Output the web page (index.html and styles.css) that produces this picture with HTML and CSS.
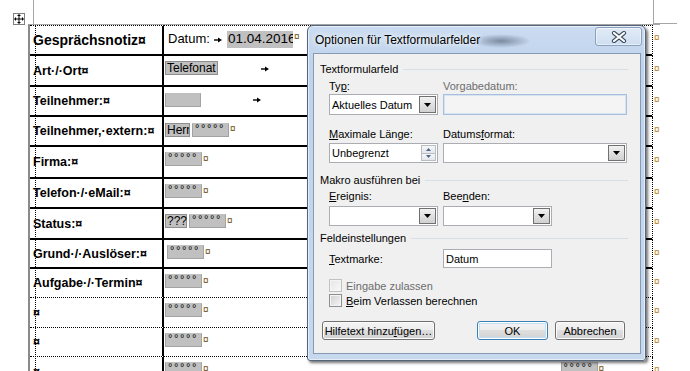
FILE: index.html
```html
<!DOCTYPE html>
<html lang="de">
<head>
<meta charset="utf-8">
<title>Optionen für Textformularfelder</title>
<link rel="stylesheet" href="styles.css">
</head>
<body>
<div class="page">
  <div class="marks">
    <div class="mark-left"></div>
    <div class="mark-right"></div>
  </div>
  <span class="move-handle"><svg width="10" height="10" viewBox="0 0 10 10"><path d="M5 1.5v7M1.5 5h7" stroke="#000" stroke-width="1"/><path d="M5 0L3 2h4zM5 10L3 8h4zM0 5l2-2v4zM10 5L8 3v4z" fill="#000"/></svg></span>

  <div class="doc-table">
    <div class="row first h31">
      <div class="cell-l head">Gesprächsnotiz¤</div>
      <div class="cell-r"><span class="plain">Datum:</span><svg class="tab t1" width="8" height="6" viewBox="0 0 8 6"><path d="M0 3h5" stroke="#000" stroke-width="1.4"/><path d="M4 0.5L8 3 4 5.5z" fill="#000"/></svg><span class="field date">01.04.2016</span><span class="cm big">¤</span></div>
      <div class="endmark">¤</div>
    </div>
    <div class="row h31">
      <div class="cell-l">Art·/·Ort¤</div>
      <div class="cell-r"><span class="field txt">Telefonat</span><svg class="tab t2" width="8" height="6" viewBox="0 0 8 6"><path d="M0 3h5" stroke="#000" stroke-width="1.4"/><path d="M4 0.5L8 3 4 5.5z" fill="#000"/></svg></div>
      <div class="endmark">¤</div>
    </div>
    <div class="row h30">
      <div class="cell-l">Teilnehmer:¤</div>
      <div class="cell-r"><span class="field empty"></span><svg class="tab t3" width="8" height="6" viewBox="0 0 8 6"><path d="M0 3h5" stroke="#000" stroke-width="1.4"/><path d="M4 0.5L8 3 4 5.5z" fill="#000"/></svg></div>
      <div class="endmark">¤</div>
    </div>
    <div class="row h30">
      <div class="cell-l">Teilnehmer,·extern:¤</div>
      <div class="cell-r"><span class="field txt herr">Herr</span><span class="field dots">°°°°°</span><span class="cm">¤</span></div>
      <div class="endmark">¤</div>
    </div>
    <div class="row h32">
      <div class="cell-l">Firma:¤</div>
      <div class="cell-r"><span class="field dots">°°°°°</span><span class="cm">¤</span></div>
      <div class="endmark">¤</div>
    </div>
    <div class="row h30">
      <div class="cell-l">Telefon·/·eMail:¤</div>
      <div class="cell-r"><span class="field dots">°°°°°</span><span class="cm">¤</span></div>
      <div class="endmark">¤</div>
    </div>
    <div class="row h31">
      <div class="cell-l">Status:¤</div>
      <div class="cell-r"><span class="field txt q">???</span><span class="field dots">°°°°°</span><span class="cm">¤</span></div>
      <div class="endmark">¤</div>
    </div>
    <div class="row h29">
      <div class="cell-l">Grund·/·Auslöser:¤</div>
      <div class="cell-r"><span class="field dots shift">°°°°°</span><span class="cm">¤</span></div>
      <div class="endmark">¤</div>
    </div>
    <div class="row h29 dot">
      <div class="cell-l">Aufgabe·/·Termin¤</div>
      <div class="cell-r"><span class="field dots">°°°°°</span><span class="cm">¤</span></div>
      <div class="endmark">¤</div>
    </div>
    <div class="row h30 dot">
      <div class="cell-l">¤</div>
      <div class="cell-r"><span class="field dots">°°°°°</span><span class="cm">¤</span></div>
      <div class="endmark">¤</div>
    </div>
    <div class="row h29 dot">
      <div class="cell-l">¤</div>
      <div class="cell-r"><span class="field dots">°°°°°</span><span class="cm">¤</span></div>
      <div class="endmark">¤</div>
    </div>
    <div class="row h30 dot">
      <div class="cell-l">¤</div>
      <div class="cell-r"><span class="field dots">°°°°°</span><span class="cm">¤</span><span class="field dots far">°°°°°</span><span class="cm">¤</span></div>
      <div class="endmark">¤</div>
    </div>
  </div>

  <div class="dialog">
    <div class="titlebar">
      <span class="title">Optionen für Textformularfelder</span>
      <span class="close"><svg width="16" height="12" viewBox="0 0 16 12"><path d="M3 2l10 8M13 2L3 10" stroke="#3d4a5c" stroke-width="4.2" stroke-linecap="round"/><path d="M3 2l10 8M13 2L3 10" stroke="#fff" stroke-width="2.2" stroke-linecap="round"/></svg></span>
    </div>
    <div class="panel">
      <div class="sec">Textformularfeld</div>
      <div class="grid lbl l1"><span>Ty<u>p</u>:</span><span class="dis">Vorgabedatum:</span></div>
      <div class="grid ctl c1">
        <div class="combo"><span class="val">Aktuelles Datum</span><span class="dd"><svg width="7" height="4" viewBox="0 0 7 4"><path d="M0 0h7L3.5 4z" fill="#000"/></svg></span></div>
        <div class="tbox disabled"></div>
      </div>
      <div class="grid lbl l2"><span><u>M</u>aximale Länge:</span><span>Datums<u>f</u>ormat:</span></div>
      <div class="grid ctl c2">
        <div class="combo spin"><span class="val">Unbegrenzt</span><span class="spinbtns"><span class="sb"><svg width="5" height="3" viewBox="0 0 5 3"><path d="M0 3h5L2.5 0z" fill="#4a6690"/></svg></span><span class="sb"><svg width="5" height="3" viewBox="0 0 5 3"><path d="M0 0h5L2.5 3z" fill="#4a6690"/></svg></span></span></div>
        <div class="combo"><span class="val"></span><span class="dd"><svg width="7" height="4" viewBox="0 0 7 4"><path d="M0 0h7L3.5 4z" fill="#000"/></svg></span></div>
      </div>
      <div class="sec s2">Makro ausführen bei</div>
      <div class="grid lbl l3"><span><u>E</u>reignis:</span><span>Bee<u>n</u>den:</span></div>
      <div class="grid ctl c3 narrow">
        <div class="combo"><span class="val"></span><span class="dd"><svg width="7" height="4" viewBox="0 0 7 4"><path d="M0 0h7L3.5 4z" fill="#000"/></svg></span></div>
        <div class="combo"><span class="val"></span><span class="dd"><svg width="7" height="4" viewBox="0 0 7 4"><path d="M0 0h7L3.5 4z" fill="#000"/></svg></span></div>
      </div>
      <div class="sec s3">Feldeinstellungen</div>
      <div class="grid ctl c4 narrow">
        <span class="inl"><u>T</u>extmarke:</span>
        <div class="tbox"><span class="val">Datum</span></div>
      </div>
      <label class="chk k1"><span class="cb dis-cb"></span><span class="dis">Eingabe zulassen</span></label>
      <label class="chk k2"><span class="cb"></span><span><u>B</u>eim Verlassen berechnen</span></label>
      <div class="buttons">
        <span class="btn b-help">Hilfetext hinzu<u>f</u>ügen…</span>
        <span class="btn b-ok">OK</span>
        <span class="btn b-cancel">Abbrechen</span>
      </div>
    </div>
  </div>
</div>
</body>
</html>
```

FILE: styles.css
```css
* { box-sizing: border-box; }
html, body { margin: 0; padding: 0; background: #fff; }
body {
  width: 690px; height: 371px; overflow: hidden;
  font-family: "Liberation Sans", Arial, sans-serif; color: #000;
}
.page { position: relative; width: 690px; height: 371px; }

/* crop marks */
.marks { display: flex; height: 24px; }
.mark-left { width: 34px; border-right: 1px solid #a6a6a6; }
.mark-right { margin-left: 619px; width: 24px; border-left: 1px solid #a6a6a6; border-bottom: 1px solid #a6a6a6; }

.move-handle {
  position: absolute; left: 13px; top: 13px; width: 12px; height: 12px;
  border: 1px solid #7f7f7f; background: #fff;
  display: flex; align-items: center; justify-content: center;
}

/* document table */
.doc-table {
  position: relative; margin-left: 28px; width: max-content;
  border-top: 1px solid #a8a8a8; border-left: 2px solid #8a8a8a;
}
.doc-table::before {
  content: ""; position: absolute; left: 5px; top: 0; bottom: 0;
  border-left: 1px dotted #000;
}
.row { display: flex; }
.h29 { height: 29px; } .h30 { height: 30px; } .h31 { height: 31px; } .h32 { height: 32px; }
.cell-l {
  width: 134px; border-right: 2px solid #000; border-bottom: 2px solid #000;
  padding-left: 3px; display: flex; align-items: center;
  font-weight: bold; font-size: 12.5px; white-space: nowrap;
}
.cell-l.head { font-size: 14px; }
.cell-r {
  width: 489px; border-right: 1px dotted #000; border-bottom: 2px solid #000;
  padding: 5px 0 0 1px; display: flex; align-items: flex-start;
  font-size: 12px; white-space: nowrap;
}
.row.first .cell-l, .row.first .cell-r { border-top: 1px dotted #000; }
.row.dot .cell-l, .row.dot .cell-r { border-bottom: 1px dotted #000; }
.endmark { padding: 7px 0 0 1px; font-size: 10px; color: #b77d12; line-height: 12px; }

.plain { font-size: 13px; line-height: 16px; margin-left: 3px; }
.tab { display: block; flex: none; }
.tab.t1 { margin: 6px 5px 0 4px; }
.tab.t2 { margin: 5px 0 0 43px; }
.tab.t3 { margin: 5px 0 0 52px; }
.field {
  display: block; flex: none; background: #c0c0c0;
  border: 1px solid #a3a3a3; border-top-color: #c0c0c0;
  height: 14px; line-height: 12px; font-size: 12px;
}
.field.date { width: 66px; height: 17px; line-height: 16px; font-size: 13.5px; overflow: hidden; border: none; padding-left: 1px; }
.field.txt { padding: 0 1px; line-height: 13px; border-color: #8e8e8e; }
.field.empty { width: 36px; height: 14px; margin-top: 1px; }
.field.herr { width: 25px; overflow: hidden; margin-top: 1px; }
.field.q { width: 22px; margin-right: 2px; }
.field.dots { width: 37px; font-size: 11px; letter-spacing: 1.6px; padding-left: 2px; line-height: 9px; }
.field.herr + .field.dots { margin-left: 2px; margin-top: 1px; }
.field.shift { margin-left: 2px; }
.field.far { margin-left: 352px; }
.cm { font-size: 10px; line-height: 14px; color: #6a4a00; margin-left: 1px; }
.cm.big { line-height: 12px; }

/* dialog window */
.dialog {
  position: absolute; left: 307px; top: 25px; width: 339px; height: 336px;
  border: 1px solid #55657d; border-radius: 6px 6px 3px 3px;
  background: linear-gradient(#cbdcf1, #bed3ec 40px, #c5d8ee);
  box-shadow: inset 0 0 0 1px rgba(255,255,255,0.55), 2px 2px 3px rgba(0,0,0,0.55);
  padding: 0 4px 6px 5px;
  display: flex; flex-direction: column;
  font-family: "Liberation Sans", Arial, sans-serif;
}
.titlebar {
  height: 27px; flex: none; display: flex; align-items: flex-start;
  padding-left: 2px;
  background: radial-gradient(ellipse 30px 7px at 188px 15px, rgba(60,72,95,0.55), rgba(60,72,95,0));
}
.title { font-size: 12px; margin-top: 7px; text-shadow: 0 0 5px #fff, 0 0 8px #fff; }
.close {
  margin-left: auto; margin-right: -1px; margin-top: 1px;
  width: 47px; height: 19px;
  border: 1px solid #8c9fbb; border-radius: 3px;
  background: linear-gradient(rgba(255,255,255,0.45), rgba(255,255,255,0.15));
  box-shadow: inset 0 0 0 1px rgba(255,255,255,0.5);
  display: flex; align-items: center; justify-content: center;
}
.panel {
  flex: 1; background: #f0f0f0; border: 1px solid #8799b3;
  padding: 8px 12px 0 6px; font-size: 11px;
}
.sec { display: flex; align-items: center; height: 14px; line-height: 14px; white-space: nowrap; }
.sec::after { content: ""; flex: 1; margin-left: 5px; border-top: 1px solid #d5dfe5; }
.s2 { margin-top: 10px; }
.s3 { margin-top: 5px; }
.grid { display: grid; grid-template-columns: 109px 184px; column-gap: 5px; padding-left: 9px; }
.grid.narrow { grid-template-columns: 109px 109px; }
.lbl { height: 14px; line-height: 14px; }
.l1 { margin-top: 3px; }
.l2 { margin-top: 12px; }
.l3 { margin-top: 2px; }
.ctl { height: 20px; }
.c1 { margin-top: 1px; height: 21px; }
.c2 { margin-top: 2px; }
.c3 { margin-top: 3px; }
.c4 { margin-top: 4px; height: 19px; }
.dis { color: #6d6d6d; }
.inl { align-self: center; }

.combo {
  background: #fff; border: 1px solid #abadb3; display: flex; align-items: center;
}
.combo .val { flex: 1; padding-left: 2px; white-space: nowrap; }
.dd {
  width: 17px; align-self: stretch; margin: 1px 1px 1px 0;
  border: 1px solid #707070; background: linear-gradient(#f2f2f2, #e0e0e0 50%, #d0d0d0);
  display: flex; align-items: center; justify-content: center;
}
.spinbtns { width: 15px; align-self: stretch; display: flex; flex-direction: column; margin: 1px 1px 1px 0; }
.sb {
  flex: 1; border: 1px solid #b8bcc4; background: linear-gradient(#f7f7f7, #e4e6ea);
  display: flex; align-items: center; justify-content: center;
}
.sb + .sb { border-top: none; }
.tbox { background: #fff; border: 1px solid #abadb3; display: flex; align-items: center; }
.tbox .val { padding-left: 2px; }
.tbox.disabled { background: #f4f4f4; border-color: #a7bfdc; box-shadow: inset 0 0 0 1px #d6e3f1; }

.chk { display: flex; align-items: center; height: 13px; padding-left: 9px; gap: 4px; white-space: nowrap; }
.k1 { margin-top: 11px; }
.k2 { margin-top: 2px; }
.cb {
  width: 13px; height: 13px; border: 1px solid #8e8f8f;
  background: linear-gradient(135deg, #cfcfcf, #f6f6f6);
  box-shadow: inset 0 0 0 1px #f4f4f4;
}
.cb.dis-cb { border-color: #c2c2c2; background: linear-gradient(135deg, #e6e6e6, #f8f8f8); }

.buttons { display: flex; margin-top: 14px; padding-left: 2px; height: 19px; }
.btn {
  height: 19px; border: 1px solid #707070; border-radius: 3px;
  background: linear-gradient(#f4f4f4, #ececec 50%, #dedede 50%, #d2d2d2);
  box-shadow: inset 0 0 0 1px #fbfbfb;
  display: flex; align-items: center; justify-content: center;
  font-size: 11px; white-space: nowrap;
}
.b-help { width: 113px; }
.b-ok {
  width: 71px; margin-left: 42px; border-color: #3c7fb1;
  box-shadow: inset 0 0 0 1px #fff, inset 0 0 0 2px #bfe0f5;
}
.b-cancel { width: 70px; margin-left: 7px; }
```
